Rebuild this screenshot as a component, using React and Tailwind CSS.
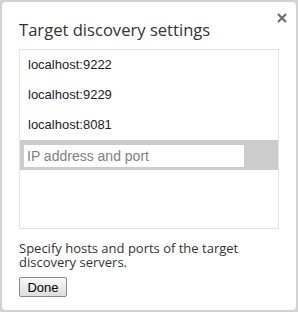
import React from 'react';

const hosts = ['localhost:9222', 'localhost:9229', 'localhost:8081'];

function CloseIcon() {
  return (
    <svg width="10" height="10" viewBox="0 0 10 10">
      <path d="M1 1 L9 9 M9 1 L1 9" stroke="#6f6f6f" strokeWidth="2.2" />
    </svg>
  );
}

export default function App() {
  return (
    <div className="w-[298px] h-[312px] bg-[#d2d2d2] p-[2px]">
      <div className="relative h-[308px] w-[294px] bg-white rounded-[4px] pl-[17px] pt-[17px]">
        <button className="absolute right-[9px] top-[11px] p-0">
          <CloseIcon />
        </button>

        <h1
          className="text-[16.6px] leading-[22px] text-[#333] m-0"
          style={{ fontFamily: '"Open Sans", sans-serif' }}
        >
          Target discovery settings
        </h1>

        <div
          className="mt-[8px] w-[260px] h-[180px] border border-[#e4e4e4]"
          style={{ fontFamily: '"Liberation Sans", Arial, sans-serif' }}
        >
          {hosts.map((h) => (
            <div key={h} className="h-[30px] flex items-center pl-[8px] text-[13px] text-[#222]">
              {h}
            </div>
          ))}
          <div className="h-[30px] bg-[#cccccc] pl-[4px] pt-[4px]">
            <input
              className="w-[220px] h-[22px] bg-white px-[3px] text-[14px] outline-none placeholder:text-[#808080]"
              placeholder="IP address and port"
            />
          </div>
        </div>

        <p
          className="mt-[12px] text-[13px] leading-[14px] text-[#333] w-[250px]"
          style={{ fontFamily: '"Open Sans", sans-serif' }}
        >
          Specify hosts and ports of the target discovery servers.
        </p>

        <button
          className="mt-[8px] w-[48px] h-[20px] border border-[#8a8a8a] rounded-[2px] bg-gradient-to-b from-[#f8f8f8] to-[#dedede] text-[13px] text-black"
          style={{ fontFamily: '"Liberation Sans", Arial, sans-serif' }}
        >
          Done
        </button>
      </div>
    </div>
  );
}
